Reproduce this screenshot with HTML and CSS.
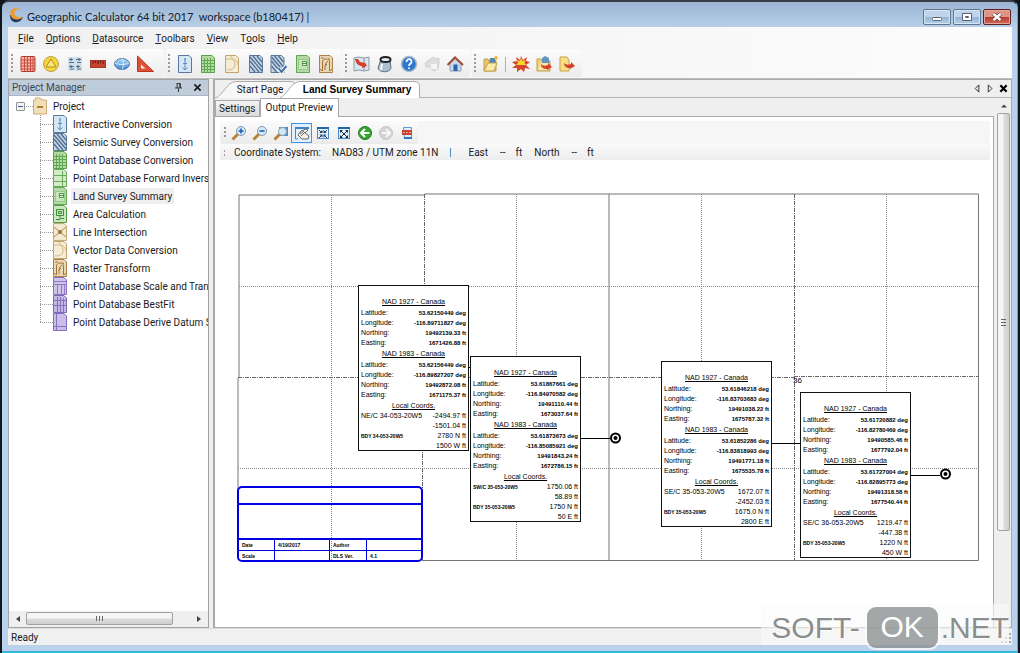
FILE: index.html
```html
<!DOCTYPE html>
<html lang="en">
<head>
<meta charset="utf-8">
<title>Geographic Calculator</title>
<link rel="stylesheet" href="styles.css">
</head>
<body>
<svg class="defs" aria-hidden="true">
  <defs>
    <linearGradient id="sky" x2="0" y2="1"><stop offset="0" stop-color="#b9dcf6"/><stop offset="1" stop-color="#3f86cc"/></linearGradient>
    <symbol id="i-interactive" viewBox="0 0 14 18"><path d="M.5.5H11L13.500 3V17.500H.5Z" fill="#d5e6f5" stroke="#57799b"/><path d="M7 3V15M4.500 12.500L7 15l2.500-2.500M5 8.500h4M7 3.500v2" fill="none" stroke="#5a8cbd"/></symbol>
    <symbol id="i-seismic" viewBox="0 0 14 18"><path d="M.5.5H11L13.500 3V17.500H.5Z" fill="#c3d3e3" stroke="#5b7896"/><path d="M1 2l12 14M4 1l9 11M8 1l5 6M1 6l9 11M1 11l5 6" stroke="#4a6b8e" stroke-width="1.200"/></symbol>
    <symbol id="i-seismic-check" viewBox="0 0 17 18"><path d="M.5.5H11L13.500 3V17.500H.5Z" fill="#c3d3e3" stroke="#5b7896"/><path d="M1 2l12 14M4 1l9 11M8 1l5 6M1 6l9 11M1 11l5 6" stroke="#4a6b8e" stroke-width="1.200"/><path d="M8 13l3 4 5-6" fill="none" stroke="#fff" stroke-width="4"/><path d="M8 13l3 4 5-6" fill="none" stroke="#3d70a8" stroke-width="2"/></symbol>
    <symbol id="i-grid" viewBox="0 0 14 18"><path d="M.5.5H11L13.500 3V17.500H.5Z" fill="#b3dba1" stroke="#5c9f4c"/><path d="M3.500 3v14M6.500 3v14M9.500 3v14M1 5.500h12M1 8.500h12M1 11.500h12M1 14.500h12" stroke="#63a854"/></symbol>
    <symbol id="i-forward" viewBox="0 0 14 18"><path d="M.5.5H11L13.500 3V17.500H.5Z" fill="#d3ebc9" stroke="#69ab58"/><path d="M1 6.500h12M1 12.500h12M9.500 2v15" stroke="#69ab58"/></symbol>
    <symbol id="i-land" viewBox="0 0 14 18"><path d="M.5.5H11L13.500 3V17.500H.5Z" fill="#b5d9a6" stroke="#64a653"/><rect x="2.500" y="4.500" width="9" height="10" fill="#c8e4bc" stroke="#9acb8a"/><path d="M6.500 6.500h4v4h-4zM6.500 8.500h4" fill="#eaf6e5" stroke="#4e9641"/></symbol>
    <symbol id="i-area" viewBox="0 0 14 18"><path d="M.5.5H11L13.500 3V17.500H.5Z" fill="#cae8be" stroke="#539c44"/><path d="M3.500 4.500h7v6h-7zM5.500 6.500h3v2h-3zM3 14.500h4v-4M8 13.500h3" fill="none" stroke="#3f8a34"/></symbol>
    <symbol id="i-line" viewBox="0 0 14 18"><path d="M.5.5H11L13.500 3V17.500H.5Z" fill="#f3e8d2" stroke="#c6ab7c"/><path d="M1 4l12 10M13 4L1 14" stroke="#b48d50"/><circle cx="7" cy="9" r="2" fill="#9d7335"/></symbol>
    <symbol id="i-vector" viewBox="0 0 14 18"><path d="M.5.5H11L13.500 3V17.500H.5Z" fill="#f7ecd5" stroke="#c2a36d"/><path d="M1 4h4c4 0 5 3 5 6s-3 5-8 5M6 1c0 2 2 2 4 4 2 1 3 3 3 5" fill="none" stroke="#cfb583"/></symbol>
    <symbol id="i-raster" viewBox="0 0 14 18"><path d="M.5.5H11L13.500 3V17.500H.5Z" fill="#ead7b4" stroke="#aa8247"/><path d="M3.500 16V7c0-4 7-4 7 0v9M6 15v-4l1-3 2-2M2 3h3M9 3l2 2M1 14l2 2M13 14l-2 2M6 11l2-2" fill="none" stroke="#a2763a"/></symbol>
    <symbol id="i-scale" viewBox="0 0 14 18"><path d="M.5.5H11L13.500 3V17.500H.5Z" fill="#cfc3ea" stroke="#8871bd"/><path d="M1 4.500h12M1 7.500h12M4.500 7v10M8.500 7v10M11.500 7v10" stroke="#8f79c4"/></symbol>
    <symbol id="i-bestfit" viewBox="0 0 14 18"><path d="M.5.5H11L13.500 3V17.500H.5Z" fill="#c5b7e4" stroke="#8069b8"/><path d="M1 5.500h12M1 10.500h12M4.500 2v15M7.500 2v15M10.500 3v14" stroke="#8770bf"/></symbol>
    <symbol id="i-datum" viewBox="0 0 14 18"><path d="M.5.5H11L13.500 3V17.500H.5Z" fill="#cabde8" stroke="#846ebb"/><path d="M3.500 1v16M1 13.500h12" stroke="#8770bf"/></symbol>
    <symbol id="i-project" viewBox="0 0 14 17"><path d="M.5 2.500h2V.5h5l1 2h5v14H.5Z" fill="#f2dfb9" stroke="#c9ad79"/><path d="M4 9.500h6" stroke="#b07e32" stroke-width="2"/></symbol>
  </defs>
</svg>

<div class="window">
  <header class="titlebar">
    <svg class="logo" viewBox="0 0 16 16"><path d="M1 8c0 10 11 10 14 2-3 2-8 3-10-2Z" fill="#263c66"/><path d="M2 9C-1 2 7-1 12 2 6 1 4 6 7 9c2 2 6 2 8 0-2 5-11 5-13 0Z" fill="#f29a24"/></svg>
    <h1 class="title">Geographic Calculator 64 bit 2017 &nbsp;workspace (b180417) |</h1>
    <div class="winbuttons">
      <button class="winbtn" aria-label="Minimize"><svg viewBox="0 0 26 14"><rect x="8.500" y="7.500" width="9" height="3" rx="1" fill="#fff" stroke="#5a6470"/></svg></button>
      <button class="winbtn" aria-label="Maximize"><svg viewBox="0 0 26 14"><path d="M8.500 3.500h9v7h-9zM11.500 6.500h3v1h-3z" fill="#fff" stroke="#5a6470"/></svg></button>
      <button class="winbtn winbtn-close" aria-label="Close"><svg viewBox="0 0 26 14"><path d="M9.500 4l7 6M16.500 4l-7 6" stroke="#5d3a3c" stroke-width="4"/><path d="M9.500 4l7 6M16.500 4l-7 6" stroke="#fff" stroke-width="2.400"/></svg></button>
    </div>
  </header>

  <div class="client">
    <nav class="menubar">
      <button><u>F</u>ile</button><button><u>O</u>ptions</button><button><u>D</u>atasource</button><button><u>T</u>oolbars</button><button><u>V</u>iew</button><button>T<u>o</u>ols</button><button><u>H</u>elp</button>
    </nav>

    <div class="toolbars">
      <div class="toolbar tb-draw">
        <span class="grip"></span>
        <button aria-label="Grid"><svg viewBox="0 0 18 18"><rect x="2" y="1.500" width="14" height="15" rx="1" fill="#f2bcb1" stroke="#b5392c"/><path d="M5.500 2v14M8.500 2v14M11.500 2v14M14 2v14M2 5h14M2 8h14M2 11h14M2 14h14" stroke="#cc4a3a"/></svg></button>
        <button aria-label="Datum"><svg viewBox="0 0 18 18"><circle cx="9" cy="9" r="7.500" fill="#f6d43c" stroke="#b9a04a"/><path d="M9 4l5 8H4Z" fill="#fae67b" stroke="#b18d1c"/></svg></button>
        <button aria-label="Point styles"><svg viewBox="0 0 18 18"><rect x="2" y="2" width="14" height="14" fill="#cfdfec"/><path d="M3 4.500h4M10 4.500h5M3 7.500h5M11 7.500h4M3 11.500h5M10 11.500h4M4 14h4M11 14h4M5 3v3M13 3v3M5 10v3M12 10v3" stroke="#5b6f82" stroke-width="1.200"/></svg></button>
        <button aria-label="Distance"><svg viewBox="0 0 18 18"><rect x="1.500" y="5.500" width="15" height="7" fill="#c9442f" stroke="#a13a2b"/><path d="M4 6v3M6.500 6v2M9 6v3M11.500 6v2M14 6v3" stroke="#5b1710"/></svg></button>
        <button aria-label="Globe"><svg viewBox="0 0 18 18"><ellipse cx="9" cy="9" rx="7.500" ry="5.500" fill="url(#sky)" stroke="#4a7db0"/><path d="M2 8c4 2 10 2 14 0M9 3.500c2 4 2 7 0 11" stroke="#dceefb" fill="none"/></svg></button>
        <button aria-label="Angle"><svg viewBox="0 0 18 18"><path d="M1.500 1v15.500h16Z" fill="#df5137" stroke="#b83522"/><path d="M5 9.500v4h4.500Z" fill="#f6f0ef"/></svg></button>
      </div>
      <div class="toolbar tb-jobs">
        <span class="grip"></span>
        <button aria-label="Interactive conversion"><svg><use href="#i-interactive"/></svg></button>
        <button aria-label="Point database conversion"><svg><use href="#i-grid"/></svg></button>
        <button aria-label="Vector data conversion"><svg><use href="#i-vector"/></svg></button>
        <button aria-label="Seismic survey"><svg><use href="#i-seismic"/></svg></button>
        <button aria-label="Seismic survey check"><svg><use href="#i-seismic-check"/></svg></button>
        <button aria-label="Land survey"><svg><use href="#i-land"/></svg></button>
        <button aria-label="Raster transform"><svg><use href="#i-raster"/></svg></button>
      </div>
      <div class="toolbar tb-view">
        <span class="grip"></span>
        <button aria-label="Map"><svg viewBox="0 0 18 18"><path d="M1 3l5-1 5 1 5-1v13l-5 1-5-1-5 1Z" fill="#d8e4ee" stroke="#8c9ba8"/><path d="M11 3v12" stroke="#7e8e9b"/><path d="M2 4l3 0 2 3 5 1-1-2 3 5-5 2v-2C6 11 3 9 2 4Z" fill="#d63f2c"/></svg></button>
        <button aria-label="Database"><svg viewBox="0 0 18 18"><path d="M5 4L2 13c1 5 12 5 13 0L14 5Z" fill="#a9c0d0" stroke="#61727e"/><path d="M6 9l-1 6" stroke="#fff" stroke-width="2"/><ellipse cx="9.500" cy="4.500" rx="5" ry="2.500" fill="#e4eaed" stroke="#222" stroke-width="2"/></svg></button>
        <button aria-label="Help"><svg viewBox="0 0 18 18"><circle cx="9" cy="9" r="7.500" fill="#2a79ce" stroke="#a9b9ca" stroke-width="1.500"/><path d="M6.500 7c0-4 5.500-3.500 5 0-.3 2-2.500 1.500-2.500 4M9 12.500v1.500" stroke="#fff" stroke-width="1.800" fill="none"/></svg></button>
        <button aria-label="Print" disabled><svg viewBox="0 0 18 18"><path d="M2 8l4-3 5-3 1 2 4-1v5l-1 5-3 3-4-2v-2l-5 0Z" fill="#dedede" stroke="#cfcfcf"/><rect x="8" y="9" width="6" height="5" fill="#f6f6f6"/></svg></button>
        <button aria-label="Home"><svg viewBox="0 0 18 18"><path d="M4 8v8h11V8L9.500 3Z" fill="#c9d8ea" stroke="#8ea0b4"/><rect x="7.500" y="9.500" width="4" height="6.500" fill="#2f5fb0"/><path d="M1.500 10L9 2.500l8 7.500" fill="none" stroke="#9b4b36" stroke-width="2"/></svg></button>
      </div>
      <div class="toolbar tb-space">
        <span class="grip"></span>
        <button aria-label="Open workspace"><svg viewBox="0 0 18 18"><path d="M2 16V4h4l1 2h7v10Z" fill="#e8c568" stroke="#c2a04f"/><path d="M8 3l5 0 1 5H7Z" fill="#4e86b5"/><path d="M2 16L6 8h9l-3 8Z" fill="#fae9a6" stroke="#c2a04f"/><path d="M14 1v4M12 3h4" stroke="#f1b62b" stroke-width="1.600"/></svg></button>
        <span class="sep"></span>
        <button aria-label="New job"><svg viewBox="0 0 18 18"><path d="M9 1l2 4 4-3-1 4 4 1-4 3 4 4-5-1-1 4-3-3-4 3v-4l-5 0 4-3-4-3 5-1-1-4 4 3Z" fill="#d8432c"/><path d="M9 3l1.500 3 3-1-1 3 2 2H4l2-2-1-3 3 1Z" fill="#f8d830"/></svg></button>
        <button aria-label="Import job"><svg viewBox="0 0 18 18"><path d="M2 16V4h4l1 2h8v10Z" fill="#f2d377" stroke="#bf9c4c"/><path d="M7 3l3-2 4 2v5H7Z" fill="#6295bf"/><path d="M3 15l3-7h8l-2 7Z" fill="#fae7a4"/><path d="M6 9c2 2 4 2 7 1V8l4 4-5 3v-1c-3 0-6-1-6-5Z" fill="#d84029"/></svg></button>
        <button aria-label="Export job"><svg viewBox="0 0 18 18"><path d="M2 2h7l2 3v11H2Z" fill="#f7df86" stroke="#c5a44f"/><path d="M6 8c2 2 4 2 7 1V7l4 4-5 3v-1c-3 0-6-1-6-5Z" fill="#d84029"/></svg></button>
      </div>
    </div>

    <main class="workspace">
      <aside class="project">
        <div class="project-head"><h2>Project Manager</h2>
          <button aria-label="Pin"><svg viewBox="0 0 10 10"><path d="M3 .5h4v5M3.500.5v5M1 5.500h8M5 6v4M6.500 1v4" stroke="#222" fill="none"/></svg></button>
          <button aria-label="Close panel"><svg viewBox="0 0 10 10"><path d="M1.500 1.500l7 7M8.500 1.500l-7 7" stroke="#222" stroke-width="2"/></svg></button>
        </div>
        <div class="tree">
          <div class="root"><span class="expander"></span><span class="dots"></span><svg><use href="#i-project"/></svg><span class="label">Project</span></div>
          <ul>
            <li><span class="branch"></span><svg><use href="#i-interactive"/></svg><span class="label">Interactive Conversion</span></li>
            <li><span class="branch"></span><svg><use href="#i-seismic"/></svg><span class="label">Seismic Survey Conversion</span></li>
            <li><span class="branch"></span><svg><use href="#i-grid"/></svg><span class="label">Point Database Conversion</span></li>
            <li><span class="branch"></span><svg><use href="#i-forward"/></svg><span class="label">Point Database Forward Inverse</span></li>
            <li><span class="branch"></span><svg><use href="#i-land"/></svg><span class="label selected">Land Survey Summary</span></li>
            <li><span class="branch"></span><svg><use href="#i-area"/></svg><span class="label">Area Calculation</span></li>
            <li><span class="branch"></span><svg><use href="#i-line"/></svg><span class="label">Line Intersection</span></li>
            <li><span class="branch"></span><svg><use href="#i-vector"/></svg><span class="label">Vector Data Conversion</span></li>
            <li><span class="branch"></span><svg><use href="#i-raster"/></svg><span class="label">Raster Transform</span></li>
            <li><span class="branch"></span><svg><use href="#i-scale"/></svg><span class="label">Point Database Scale and Tran</span></li>
            <li><span class="branch"></span><svg><use href="#i-bestfit"/></svg><span class="label">Point Database BestFit</span></li>
            <li><span class="branch"></span><svg><use href="#i-datum"/></svg><span class="label">Point Database Derive Datum S</span></li>
          </ul>
        </div>
        <div class="hscroll">
          <button aria-label="Scroll left"><svg viewBox="0 0 8 8"><path d="M6 1v6L2 4Z" fill="#444"/></svg></button>
          <div class="htrack"><div class="hthumb"><svg viewBox="0 0 8 6"><path d="M1.500 0v5M4.500 0v5M7.500 0v5" stroke="#666"/></svg></div></div>
          <button aria-label="Scroll right"><svg viewBox="0 0 8 8"><path d="M2 1v6l4-3Z" fill="#444"/></svg></button>
        </div>
      </aside>

      <section class="document">
        <div class="doctabs">
          <button class="doctab start"><svg viewBox="0 0 81 17" preserveAspectRatio="none"><path d="M0 17C7 14 11 1 20 .5H76Q80 .5 80.500 5V17" fill="#f7f7f7" stroke="#aaa"/></svg><span>Start Page</span></button>
          <button class="doctab active"><svg viewBox="0 0 141 17" preserveAspectRatio="none"><path d="M0 17C7 14 11 1 20 .5H136Q140 .5 140.500 5V17" fill="#fff" stroke="#aaa"/></svg><span>Land Survey Summary</span></button>
          <div class="doctools">
            <button aria-label="Previous tab"><svg viewBox="0 0 10 10"><path d="M6.500 1v8l-4-4Z" fill="none" stroke="#222"/></svg></button>
            <button aria-label="Next tab"><svg viewBox="0 0 10 10"><path d="M2.500 1v8l4-4Z" fill="none" stroke="#222"/></svg></button>
            <button aria-label="Close tab"><svg viewBox="0 0 10 10"><path d="M1.500 1.500l7 7M8.500 1.500l-7 7" stroke="#000" stroke-width="2.400"/></svg></button>
          </div>
        </div>
        <div class="docbody">
          <div class="pane">
            <div class="tabs"><button class="tab">Settings</button><button class="tab current">Output Preview</button></div>
            <div class="preview">
              <div class="previewtools">
                <span class="grip"></span>
                <button aria-label="Zoom in"><svg viewBox="0 0 16 16"><path d="M1.500 14.500L7 9" stroke="#b98332" stroke-width="3"/><circle cx="10" cy="6" r="4.500" fill="#d5e9fa" stroke="#8097b0"/><path d="M7.500 6h5M10 3.500v5" stroke="#1d62b5" stroke-width="1.600"/></svg></button>
                <button aria-label="Zoom out"><svg viewBox="0 0 16 16"><path d="M1.500 14.500L7 9" stroke="#b98332" stroke-width="3"/><circle cx="10" cy="6" r="4.500" fill="#d5e9fa" stroke="#8097b0"/><path d="M7.500 6h5" stroke="#1d62b5" stroke-width="1.600"/></svg></button>
                <button aria-label="Zoom window"><svg viewBox="0 0 16 16"><path d="M1.500 14.500L7 9" stroke="#b98332" stroke-width="3"/><rect x="6" y="2" width="9" height="9" fill="#4c8fc6"/><circle cx="9.500" cy="6.500" r="4" fill="#d0e8f4" stroke="#8aa1b4"/></svg></button>
                <button class="on" aria-label="Pan" aria-pressed="true"><svg viewBox="0 0 16 16"><path d="M1 2h14v2H1z" fill="#3d83c6"/><path d="M1.500 2v12H4" fill="none" stroke="#4a87bd"/><path d="M4 10l3-4 5-2 2 1-3 3 4 3-1 3H8Z" fill="#f4f1ed" stroke="#666"/><path d="M6 9l4-3M7 11l4-4" stroke="#666"/></svg></button>
                <button aria-label="Zoom extents in"><svg viewBox="0 0 16 16"><rect x="2.500" y="2.500" width="11" height="11" fill="#e4f0fa" stroke="#4b8ac4"/><path d="M2 3h12" stroke="#2466aa" stroke-width="2"/><path d="M7.500 5v3H4.500ZM8.500 5v3h3ZM7.500 12.500v-3h-3ZM8.500 12.500v-3h3Z" fill="#163c5f"/><path d="M4 5l3 3M12 5L9 8M4 13l3-3M12 13l-3-3" stroke="#163c5f"/></svg></button>
                <button aria-label="Zoom extents"><svg viewBox="0 0 16 16"><rect x="2.500" y="2.500" width="11" height="11" fill="#e4f0fa" stroke="#4b8ac4"/><path d="M2 3h12" stroke="#2466aa" stroke-width="2"/><path d="M4 5h3L4 8ZM12 5H9l3 3ZM4 13v-3l3 3ZM12 13v-3l-3 3Z" fill="#152f4b"/><path d="M5 6l6 6M11 6l-6 6" stroke="#152f4b"/></svg></button>
                <button aria-label="Back"><svg viewBox="0 0 16 16"><circle cx="8" cy="8" r="6.500" fill="#35a62c" stroke="#1d7c1b"/><path d="M12.500 8H4M8 4L4 8l4 4" fill="none" stroke="#fff" stroke-width="2"/></svg></button>
                <button aria-label="Forward" disabled><svg viewBox="0 0 16 16"><circle cx="8" cy="8" r="6.500" fill="#d3d3d3" stroke="#c8c8c8"/><path d="M3.500 8H12M8 4l4 4-4 4" fill="none" stroke="#f6f6f6" stroke-width="2"/></svg></button>
                <button aria-label="Export PDF"><svg viewBox="0 0 16 16"><path d="M4.500 2.500h8v11h-7Z" fill="#e1eef8" stroke="#5d9bd0"/><path d="M3 5h10v5H3Z" fill="#c44434"/><path d="M4 7.500h8" stroke="#e8a39a" stroke-dasharray="2 1"/><path d="M5 13h8" stroke="#2b79bd" stroke-width="2"/></svg></button>
              </div>
              <div class="coords"><span class="grip"></span><span class="c-name">Coordinate System:</span><span class="c-sys">NAD83 / UTM zone 11N</span><span class="c-bar"></span><span class="c-east">East</span><span class="c-dash">--</span><span class="c-unit">ft</span><span class="c-north">North</span><span class="c-dash">--</span><span class="c-unit">ft</span></div>

              <div class="plot">
                <svg class="lines" viewBox="0 0 770 440">
                  <g class="edge"><path d="M24 218V35H209.500V34H763.500V400.500H207M23 218V330M394 34V400"/></g>
                  <g class="dot"><path d="M24 126.500H763M23 308.500H763M116.500 35V400M301.500 34V400M486.500 34V400M671.500 34V400"/></g>
                  <g class="dash"><path d="M23 217.500H579M579 216.500H763M209.500 34V217M207.500 217V400M579.500 34V400"/></g>
                  <path class="link" d="M253 207.500h3M365 278.500h30M556 283.500h30M695 315.500h30"/>
                  <g class="target"><circle cx="400.500" cy="278" r="4.500"/><circle cx="730.500" cy="314" r="4.500"/></g>
                  <circle cx="400.500" cy="278" r="2"/><circle cx="730.500" cy="314" r="2"/>
                  <text x="578" y="223" class="section-no">36</text>
                </svg>
                <article class="card card-a">
                  <h3>NAD 1927 - Canada</h3>
                  <dl><div><dt>Latitude:</dt><dd>53.62150449 deg</dd></div><div><dt>Longitude:</dt><dd>-116.89711827 deg</dd></div><div><dt>Northing:</dt><dd>19492139.33 ft</dd></div><div><dt>Easting:</dt><dd>1671426.88 ft</dd></div></dl>
                  <h3>NAD 1983 - Canada</h3>
                  <dl><div><dt>Latitude:</dt><dd>53.62156449 deg</dd></div><div><dt>Longitude:</dt><dd>-116.89827207 deg</dd></div><div><dt>Northing:</dt><dd>19492872.08 ft</dd></div><div><dt>Easting:</dt><dd>1671175.37 ft</dd></div></dl>
                  <h3>Local Coords.</h3>
                  <dl class="local"><div><dt>NE/C 34-053-20W5</dt><dd>-2494.97 ft</dd></div><div><dd>-1501.04 ft</dd></div><div><dt class="bdy">BDY 34-053-20W5</dt><dd>2780 N ft</dd></div><div><dd>1500 W ft</dd></div></dl>
                </article>
                <article class="card card-b">
                  <h3>NAD 1927 - Canada</h3>
                  <dl><div><dt>Latitude:</dt><dd>53.61867661 deg</dd></div><div><dt>Longitude:</dt><dd>-116.84970582 deg</dd></div><div><dt>Northing:</dt><dd>19491110.44 ft</dd></div><div><dt>Easting:</dt><dd>1673037.64 ft</dd></div></dl>
                  <h3>NAD 1983 - Canada</h3>
                  <dl><div><dt>Latitude:</dt><dd>53.61873673 deg</dd></div><div><dt>Longitude:</dt><dd>-116.85085921 deg</dd></div><div><dt>Northing:</dt><dd>19491843.24 ft</dd></div><div><dt>Easting:</dt><dd>1672786.15 ft</dd></div></dl>
                  <h3>Local Coords.</h3>
                  <dl class="local"><div><dt class="bdy">SW/C 35-053-20W5</dt><dd>1750.06 ft</dd></div><div><dd>58.89 ft</dd></div><div><dt class="bdy">BDY 35-053-20W5</dt><dd>1750 N ft</dd></div><div><dd>50 E ft</dd></div></dl>
                </article>
                <article class="card card-c">
                  <h3>NAD 1927 - Canada</h3>
                  <dl><div><dt>Latitude:</dt><dd>53.61846218 deg</dd></div><div><dt>Longitude:</dt><dd>-116.83703683 deg</dd></div><div><dt>Northing:</dt><dd>19491038.22 ft</dd></div><div><dt>Easting:</dt><dd>1675787.32 ft</dd></div></dl>
                  <h3>NAD 1983 - Canada</h3>
                  <dl><div><dt>Latitude:</dt><dd>53.61852286 deg</dd></div><div><dt>Longitude:</dt><dd>-116.83818993 deg</dd></div><div><dt>Northing:</dt><dd>19491771.18 ft</dd></div><div><dt>Easting:</dt><dd>1675535.78 ft</dd></div></dl>
                  <h3>Local Coords.</h3>
                  <dl class="local"><div><dt>SE/C 35-053-20W5</dt><dd>1672.07 ft</dd></div><div><dd>-2452.03 ft</dd></div><div><dt class="bdy">BDY 35-053-20W5</dt><dd>1675.0 N ft</dd></div><div><dd>2800 E ft</dd></div></dl>
                </article>
                <article class="card card-d">
                  <h3>NAD 1927 - Canada</h3>
                  <dl><div><dt>Latitude:</dt><dd>53.61720882 deg</dd></div><div><dt>Longitude:</dt><dd>-116.82780469 deg</dd></div><div><dt>Northing:</dt><dd>19490585.46 ft</dd></div><div><dt>Easting:</dt><dd>1677792.04 ft</dd></div></dl>
                  <h3>NAD 1983 - Canada</h3>
                  <dl><div><dt>Latitude:</dt><dd>53.61727004 deg</dd></div><div><dt>Longitude:</dt><dd>-116.82895773 deg</dd></div><div><dt>Northing:</dt><dd>19491318.58 ft</dd></div><div><dt>Easting:</dt><dd>1677540.44 ft</dd></div></dl>
                  <h3>Local Coords.</h3>
                  <dl class="local"><div><dt>SE/C 36-053-20W5</dt><dd>1219.47 ft</dd></div><div><dd>-447.38 ft</dd></div><div><dt class="bdy">BDY 35-053-20W5</dt><dd>1220 N ft</dd></div><div><dd>450 W ft</dd></div></dl>
                </article>
                <div class="titleblock">
                  <div class="tb-title"></div><div class="tb-notes"></div>
                  <div class="tb-row"><span>Date</span><span>4/19/2017</span><span>Author</span><span></span></div>
                  <div class="tb-row"><span>Scale</span><span></span><span>DLS Ver.</span><span>4.1</span></div>
                </div>
              </div>
            </div>
          </div>
          <div class="vscroll">
            <button aria-label="Scroll up"><svg viewBox="0 0 8 8"><path d="M1 5.500h6L4 2.500Z" fill="#444"/></svg></button>
            <div class="vthumb"><svg viewBox="0 0 6 8"><path d="M0 1.500h5M0 4.500h5M0 7.500h5" stroke="#666"/></svg></div>
          </div>
        </div>
      </section>
    </main>
    <footer class="status">Ready<svg viewBox="0 0 12 12"><path d="M10 1v2M10 5v2M10 9v2M6 5v2M6 9v2M2 9v2" stroke="#a9a9a9" stroke-width="2"/></svg></footer>
  </div>
</div>
<div class="watermark"><span>SOFT-</span><span class="wm-ok">OK</span><span>.NET</span></div>
</body>
</html>
```

FILE: styles.css
```css
* { box-sizing: border-box; }
body { margin: 0; height: 100vh; background: #11151c; font: 10px/12px Roboto, "Liberation Sans", Arial, sans-serif; color: #1a1a1a; }
button { font: inherit; color: inherit; background: none; border: 0; padding: 0; margin: 0; display: flex; align-items: center; justify-content: center; }
h1, h2, h3, dl, dd, dt, ul { margin: 0; padding: 0; font-weight: normal; }
ul { list-style: none; }
svg { display: block; flex: none; }
.defs { position: absolute; width: 0; height: 0; }

.window { height: 100vh; display: flex; flex-direction: column; margin: 0 2px; padding: 0 5px 6px; background: linear-gradient(#9bb5d3, #b9d1ea 27px); border: solid #35b9d8; border-width: 2px 1px 2px 0; border-top-color: #3a3c46; border-radius: 7px 7px 0 0; }
.titlebar { height: 25px; flex: none; display: flex; align-items: center; padding-left: 2px; gap: 3px; }
.logo { width: 15px; height: 16px; }
.title { flex: 1; font: 11px/16px Lato, "Noto Sans", sans-serif; color: #15202c; white-space: nowrap; padding-top: 5px; }
.winbuttons { display: flex; gap: 2px; padding-top: 4px; margin-right: 1px; }
.winbtn { width: 28px; height: 16px; border: 1px solid #60768f; border-radius: 2px; box-shadow: inset 0 0 0 1px #d6e5f4; background: linear-gradient(#bfd3ea 50%, #94b2d3 50%, #b3d0ea); }
.winbtn svg { width: 26px; height: 14px; }
.winbtn-close { border-color: #5d1f22; box-shadow: inset 0 0 0 1px #e3a69d; background: linear-gradient(#dd9385 50%, #b8392b 50%, #d0695a); }

.client { flex: 1; min-height: 0; margin-left: 1px; display: flex; flex-direction: column; background: #efefef; }
.menubar { height: 22px; flex: none; display: flex; align-items: center; gap: 12px; padding: 1px 0 0 10px; background: linear-gradient(90deg, #f0f0f0, #fcfcfc); }
.toolbars { height: 30px; flex: none; display: flex; gap: 2px; align-items: stretch; background: linear-gradient(90deg, #f0f0f0, #fcfcfc); border-bottom: 1px solid #bcbcbc; padding: 0 1px 1px; }
.toolbar { display: flex; align-items: center; padding: 2px 3px 0 2px; border-radius: 3px; background: linear-gradient(#fcfcfc, #ececec); }
.toolbar .grip { margin-right: 3px; }
.toolbar button { flex: 1; height: 24px; }
.tb-draw { width: 155px; padding-right: 7px; }
.tb-jobs { width: 175px; }
.tb-view { width: 127px; }
.tb-space { width: 110px; }
.toolbar svg { width: 18px; height: 18px; }
.grip { flex: none; width: 2px; height: 20px; margin-right: 4px; background: repeating-linear-gradient(#9a9a9a 0 2px, transparent 2px 4px); }
.sep { width: 1px; height: 15px; margin: 0 3px; background: #b0b0b0; }

.workspace { flex: 1; min-height: 0; display: flex; gap: 4px; }
.project { flex: none; width: 201px; display: flex; flex-direction: column; background: #fff; border: 1px solid #a0a4aa; }
.project-head { height: 16px; flex: none; display: flex; align-items: center; gap: 10px; padding: 0 6px 0 3px; background: #bfcddb; border-bottom: 1px solid #aab6c3; color: #3a4858; }
.project-head h2 { flex: 1; font-size: 10px; }
.project-head svg { width: 9px; height: 9px; }
.tree { flex: 1; overflow: hidden; padding-top: 1px; }
.root, .tree li { height: 18px; display: flex; align-items: center; white-space: nowrap; }
.root { padding-left: 7px; }
.tree svg { width: 14px; height: 18px; }
.tree li { padding-left: 31px; }
.label { padding: 3px 2px 1px; margin-left: 4px; }
.selected { background: #efefef; }
.expander { width: 9px; height: 9px; margin-right: 1px; border: 1px solid #919191; border-radius: 1px; background: linear-gradient(#3c5a9a, #3c5a9a) center / 5px 1px no-repeat, #f3f3f3; }
.dots { width: 7px; height: 1px; background: repeating-linear-gradient(90deg, #999 0 1px, transparent 1px 2px); }
.branch { flex: none; width: 13px; height: 18px; background: repeating-linear-gradient(90deg, #999 0 1px, transparent 1px 2px) 0 50% / 100% 1px no-repeat, repeating-linear-gradient(#999 0 1px, transparent 1px 2px) 0 0 / 1px 100% no-repeat; }
li:last-child .branch { background-size: 100% 1px, 1px 50%; }
.hscroll { height: 16px; flex: none; display: flex; padding: 1px; background: #efefef; }
.hscroll button { width: 16px; }
.hscroll button svg, .vscroll button svg { width: 8px; height: 8px; }
.htrack { flex: 1; }
.hthumb { width: 89%; height: 13px; display: flex; align-items: center; justify-content: center; border: 1px solid #a2a2a2; border-radius: 2px; background: linear-gradient(#f5f5f5 45%, #dcdcdc 55%, #cfcfcf); }
.hthumb svg { width: 8px; height: 6px; }

.document { flex: 1; min-width: 0; display: flex; flex-direction: column; border: solid #aaa; border-width: 1px 1px 1px 2px; }
.doctabs { height: 18px; flex: none; display: flex; align-items: flex-end; padding-left: 1px; background: #efefef; border-bottom: 1px solid #b4b4b4; }
.doctab { display: grid; height: 17px; margin-bottom: -1px; }
.doctab > * { grid-area: 1 / 1; }
.doctab svg { width: 100%; height: 17px; }
.doctab span { padding-left: 8px; }
.start { width: 80px; }
.active { width: 140px; margin-left: -16px; font: bold 10px/12px "Liberation Sans", Arial, sans-serif; color: #000; }
.active span { padding-left: 14px; }
.doctools { margin-left: auto; height: 17px; display: flex; align-items: center; gap: 4px; padding-right: 3px; }
.doctools svg { width: 9px; height: 9px; }
.docbody { flex: 1; min-height: 0; display: flex; background: #efefef; }
.pane { flex: 1; min-width: 0; display: flex; flex-direction: column; }
.tabs { height: 18px; flex: none; display: flex; align-items: flex-end; }
.tab { height: 16px; padding: 0 3px; border: 1px solid #a5a9af; border-bottom: 0; background: linear-gradient(#f4f4f4, #dadada); }
.tab.current { height: 19px; background: #fff; margin-bottom: -1px; padding: 0 5px 1px; z-index: 1; }
.preview { flex: 1; min-height: 0; overflow: hidden; background: #fff; border: 1px solid #a5a9af; border-width: 1px 1px 0 0; padding: 4px 3px 0 5px; }
.previewtools { height: 23px; width: 770px; max-width: 100%; display: flex; align-items: center; padding-left: 4px; background: linear-gradient(#fbfbfb, #ebebeb) 0 0 / 198px 100% no-repeat, #f6f6f6; border-radius: 3px; }
.previewtools .grip { height: 12px; margin-right: 2px; }
.previewtools button { width: 21px; height: 20px; }
.previewtools svg { width: 16px; height: 16px; }
.previewtools .on { border: 1px solid #3d97e8; background: #e4f1fc; }
.coords { height: 16px; display: flex; align-items: center; width: 770px; max-width: 100%; padding: 1px 0 0 4px; background: linear-gradient(#fafafa, #ededed); white-space: nowrap; }
.coords .grip { height: 6px; width: 1px; margin-right: 9px; }
.c-sys { margin-left: 11px; }
.c-bar { width: 1px; height: 9px; margin: 0 17px 0 12px; background: #4a8cc8; }
.c-dash { margin: 0 10px 0 12px; }
.c-north { margin-left: 12px; }

.plot { position: relative; width: 770px; height: 440px; margin-left: -5px; font-family: "Liberation Sans", Arial, sans-serif; }
.lines { position: absolute; inset: 0; width: 770px; height: 440px; }
.lines path { fill: none; }
.edge { stroke: #777; }
.dot { stroke: #888; stroke-dasharray: 1 1; }
.dash { stroke: #666; stroke-dasharray: 4 1 1 1; }
.link { stroke: #000; }
.target { fill: #fff; stroke: #000; stroke-width: 2; }
.section-no { font-size: 8px; }
.card { position: absolute; width: 111px; height: 166px; padding: 11px 2px 0; border: 1px solid #111; background: #fff; font-size: 7px; line-height: 10px; color: #000; }
.card-a { left: 143px; top: 125px; }
.card-b { left: 255px; top: 196px; }
.card-c { left: 446px; top: 201px; }
.card-d { left: 585px; top: 232px; }
.card h3 { font-size: 7px; text-align: center; text-decoration: underline; }
.card dl { padding: 1px 0; }
.card dl.local { padding: 0; }
.card dl div { display: flex; justify-content: space-between; white-space: nowrap; }
.card dd { margin-left: auto; font-size: 6px; font-weight: bold; }
.card .local dd { font-size: 7px; font-weight: normal; }
.card .bdy { font-size: 5px; font-weight: bold; }
.titleblock { position: absolute; left: 22px; top: 326px; width: 186px; border: 2px solid #0000e0; border-radius: 5px; font: bold 5px/10px "Liberation Sans", Arial, sans-serif; color: #000; }
.tb-title { height: 17px; border-bottom: 2px solid #0000e0; }
.tb-notes { height: 35px; border-bottom: 2px solid #0000e0; }
.tb-row { display: grid; grid-template-columns: 35px 55px 37px 1fr; height: 10px; }
.tb-row + .tb-row { border-top: 1px solid #0000e0; }
.tb-row span { padding-left: 3px; }
.tb-row span + span { border-left: 1px solid #0000e0; }

.vscroll { flex: none; width: 17px; display: flex; flex-direction: column; align-items: center; padding: 0 1px 0 3px; }
.vscroll button { width: 13px; height: 15px; }
.vthumb { width: 13px; height: 79%; display: flex; align-items: center; justify-content: center; border: 1px solid #a2a2a2; border-radius: 2px; background: linear-gradient(90deg, #f5f5f5 45%, #dcdcdc 55%, #cfcfcf); }
.vthumb svg { width: 6px; height: 8px; }
.status { height: 17px; flex: none; display: flex; align-items: center; justify-content: space-between; padding: 1px 0 0 3px; border-top: 1px solid #dcdcdc; background: #f0f0f0; }
.status svg { width: 12px; height: 12px; }

.watermark { position: absolute; right: 11px; bottom: 2px; display: flex; align-items: center; height: 47px; gap: 3px; padding-left: 10px; background: linear-gradient(rgba(250, 250, 250, .6), rgba(250, 250, 250, .6)) 0 0 / 100% 41px no-repeat; font: 30px/40px "Liberation Sans", Arial, sans-serif; color: #8c8e8e; text-shadow: 0 0 3px #fff, 0 0 3px #fff; }
.wm-ok { width: 71px; height: 41px; margin-left: 4px; border-radius: 9px; text-align: center; color: #fff; background: rgba(135, 139, 139, .75); box-shadow: 0 0 0 2px rgba(255, 255, 255, .7); text-shadow: none; }
```
